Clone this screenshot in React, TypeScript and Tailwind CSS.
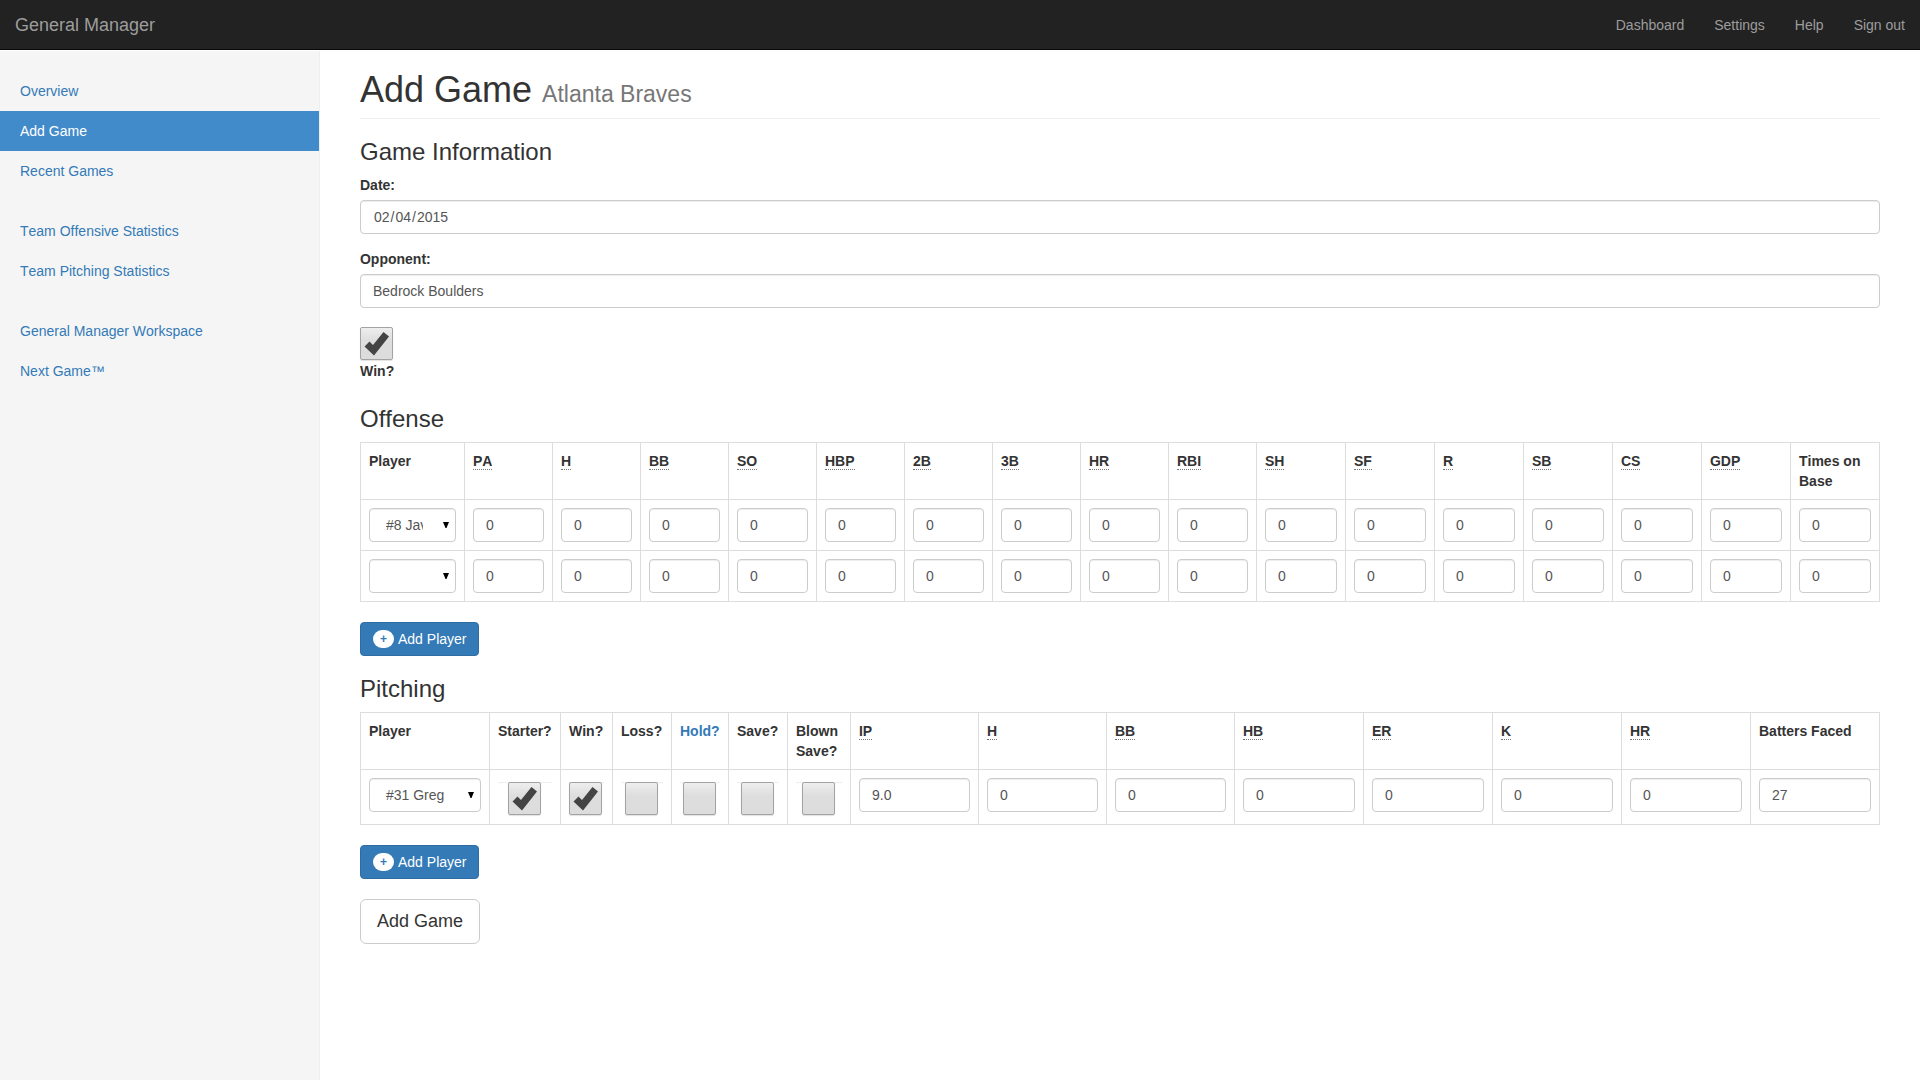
import React from "react";

const inputClass =
  "block h-[34px] w-full rounded border border-[#ccc] bg-white px-3 py-1.5 text-sm text-[#555] shadow-[inset_0_1px_1px_rgba(0,0,0,0.075)] outline-none focus:border-[#66afe9]";
const headCell = "h-[57px] border border-[#ddd] p-2 text-left align-top font-bold";
const bodyCell = "border border-[#ddd] p-2 align-top";

const offenseColumns: [string, string][] = [
  ["PA", "Plate Appearances"],
  ["H", "Hits"],
  ["BB", "Walks"],
  ["SO", "Strikeouts"],
  ["HBP", "Hit By Pitch"],
  ["2B", "Doubles"],
  ["3B", "Triples"],
  ["HR", "Home Runs"],
  ["RBI", "Runs Batted In"],
  ["SH", "Sacrifice Hits"],
  ["SF", "Sacrifice Flies"],
  ["R", "Runs"],
  ["SB", "Stolen Bases"],
  ["CS", "Caught Stealing"],
  ["GDP", "Grounded Into Double Play"],
];

const pitchingColumns: [string, string, string][] = [
  ["IP", "Innings Pitched", "9.0"],
  ["H", "Hits", "0"],
  ["BB", "Walks", "0"],
  ["HB", "Hit Batters", "0"],
  ["ER", "Earned Runs", "0"],
  ["K", "Strikeouts", "0"],
  ["HR", "Home Runs", "0"],
];

const decisions: { label: string; width: string; checked: boolean; link?: boolean }[] = [
  { label: "Starter?", width: "w-[71px]", checked: true },
  { label: "Win?", width: "w-[52px]", checked: true },
  { label: "Loss?", width: "w-[59px]", checked: false },
  { label: "Hold?", width: "w-[57px]", checked: false, link: true },
  { label: "Save?", width: "w-[59px]", checked: false },
  { label: "Blown Save?", width: "w-[63px]", checked: false },
];

const sidebarGroups = [
  ["Overview", "Add Game", "Recent Games"],
  ["Team Offensive Statistics", "Team Pitching Statistics"],
  ["General Manager Workspace", "Next Game™"],
];

function Abbr({ label, title }: { label: string; title: string }) {
  return (
    <abbr title={title} className="cursor-help border-b border-dotted border-[#777] no-underline">
      {label}
    </abbr>
  );
}

function Tick({ id, label, checked }: { id?: string; label?: string; checked: boolean }) {
  return (
    <span className="grid h-[34px] w-[34px] shrink-0">
      <input
        id={id}
        aria-label={label}
        type="checkbox"
        defaultChecked={checked}
        className="peer col-start-1 row-start-1 h-[33px] w-[33px] appearance-none rounded-xs border border-[#a3a3a3] bg-linear-to-b from-[#eee] via-[#dedede] via-40% to-[#dcdcdc] shadow-[0_1px_1px_rgba(0,0,0,0.12)]"
      />
      <svg
        viewBox="0 0 33 33"
        className="pointer-events-none invisible col-start-1 row-start-1 h-[33px] w-[33px] peer-checked:visible"
        aria-hidden="true"
      >
        <path d="M4.5 19.5 L9.5 14.5 L13 18 L23.5 5 L29 9.5 L14 28.5 Z" fill="#444" />
      </svg>
    </span>
  );
}

function PlayerSelect({ id, value }: { id: string; value: string }) {
  return (
    <span className="grid">
      <select
        id={id}
        aria-label="Player"
        defaultValue={value}
        className="col-start-1 row-start-1 block h-[34px] w-full appearance-none rounded border border-[#ccc] bg-white py-1.5 pr-8 pl-4 text-sm text-[#555] shadow-[inset_0_1px_1px_rgba(0,0,0,0.075)] outline-none"
      >
        <option value=""></option>
        <option value="8">#8 Javy Lopez</option>
        <option value="31">#31 Greg Maddux</option>
      </select>
      <svg
        viewBox="0 0 6 6"
        className="pointer-events-none col-start-1 row-start-1 mr-[7px] h-1.5 w-1.5 self-center justify-self-end"
        aria-hidden="true"
      >
        <path d="M0 0 H6 L3.5 6 H2.5 Z" fill="#000" />
      </svg>
    </span>
  );
}

function AddPlayer() {
  return (
    <button
      type="button"
      className="flex h-[34px] items-center gap-1 rounded border border-[#2e6da4] bg-[#337ab7] px-3 text-sm text-white"
    >
      <span className="flex h-[18px] items-center rounded-[10px] bg-white px-[7px] text-xs leading-none font-bold text-[#337ab7]">
        +
      </span>
      Add Player
    </button>
  );
}

function OffenseRow({ player, index }: { player: string; index: number }) {
  return (
    <tr>
      <td className={bodyCell}>
        <PlayerSelect id={`offense-player-${index}`} value={player} />
      </td>
      {offenseColumns.map(([label, title]) => (
        <td key={label} className={bodyCell}>
          <input className={inputClass} aria-label={title} defaultValue="0" />
        </td>
      ))}
      <td className={bodyCell}>
        <input className={inputClass} aria-label="Times on Base" defaultValue="0" />
      </td>
    </tr>
  );
}

export default function App() {
  return (
    <div className="flex min-h-screen flex-col bg-white font-['Liberation_Sans',Arial,sans-serif] text-sm leading-5 text-[#333] [font-kerning:none]">
      <header className="mb-px flex h-[50px] items-center justify-between border-b border-[#080808] bg-[#222] px-[15px] text-[#9d9d9d]">
        <a href="#" className="text-lg leading-5">
          General Manager
        </a>
        <nav className="flex gap-[30px]">
          <a href="#">Dashboard</a>
          <a href="#">Settings</a>
          <a href="#">Help</a>
          <a href="#">Sign out</a>
        </nav>
      </header>

      <div className="flex grow">
        <aside className="flex w-1/6 shrink-0 flex-col gap-5 border-r border-[#eee] bg-[#f5f5f5] py-5">
          {sidebarGroups.map((group) => (
            <ul key={group[0]}>
              {group.map((item) => (
                <li key={item}>
                  <a
                    href="#"
                    className={
                      item === "Add Game"
                        ? "block bg-[#428bca] px-5 py-2.5 text-white"
                        : "block px-5 py-2.5 text-[#337ab7]"
                    }
                  >
                    {item}
                  </a>
                </li>
              ))}
            </ul>
          ))}
        </aside>

        <main className="min-w-0 grow px-10 pt-[19px] pb-10">
          <div className="border-b border-[#eee] pb-2">
            <h1 className="text-4xl leading-10">
              Add Game <small className="text-[23px] leading-none text-[#777]">Atlanta Braves</small>
            </h1>
          </div>

          <form onSubmit={(e) => e.preventDefault()}>
            <h3 className="mt-5 mb-2.5 text-2xl leading-[26px]">Game Information</h3>
            <label htmlFor="date" className="mb-[5px] block font-bold">
              Date:
            </label>
            <input
              id="date"
              type="date"
              className={`${inputClass} [&::-webkit-calendar-picker-indicator]:hidden`}
              defaultValue="2015-02-04"
            />
            <label htmlFor="opponent" className="mt-[15px] mb-[5px] block font-bold">
              Opponent:
            </label>
            <input id="opponent" className={inputClass} defaultValue="Bedrock Boulders" />
            <div className="mt-[19px]">
              <Tick id="win" checked />
              <label htmlFor="win" className="block font-bold">
                Win?
              </label>
            </div>

            <h3 className="mt-[25px] mb-2.5 text-2xl leading-[26px]">Offense</h3>
            <table className="w-full table-fixed border-collapse">
              <thead>
                <tr>
                  <th className={`${headCell} w-[104px]`}>Player</th>
                  {offenseColumns.map(([label, title], i) => (
                    <th key={label} className={i < 9 ? `${headCell} w-[88px]` : headCell}>
                      <Abbr label={label} title={title} />
                    </th>
                  ))}
                  <th className={headCell}>Times on Base</th>
                </tr>
              </thead>
              <tbody>
                <OffenseRow player="8" index={1} />
                <OffenseRow player="" index={2} />
              </tbody>
            </table>
            <div className="mt-5">
              <AddPlayer />
            </div>

            <h3 className="mt-5 mb-2.5 text-2xl leading-[26px]">Pitching</h3>
            <table className="w-full table-fixed border-collapse">
              <thead>
                <tr>
                  <th className={`${headCell} w-[129px]`}>Player</th>
                  {decisions.map((d) => (
                    <th key={d.label} className={`${headCell} ${d.width}`}>
                      {d.link ? (
                        <a href="#" className="text-[#337ab7]">
                          {d.label}
                        </a>
                      ) : (
                        d.label
                      )}
                    </th>
                  ))}
                  {pitchingColumns.map(([label, title], i) => (
                    <th key={label} className={i < 3 ? `${headCell} w-[128px]` : headCell}>
                      <Abbr label={label} title={title} />
                    </th>
                  ))}
                  <th className={headCell}>Batters Faced</th>
                </tr>
              </thead>
              <tbody>
                <tr>
                  <td className={bodyCell}>
                    <PlayerSelect id="pitching-player" value="31" />
                  </td>
                  {decisions.map((d) => (
                    <td key={d.label} className={bodyCell}>
                      <div className="mt-1 flex justify-center shadow-[inset_0_1px_1px_rgba(0,0,0,0.075)]">
                        <Tick label={d.label} checked={d.checked} />
                      </div>
                    </td>
                  ))}
                  {pitchingColumns.map(([label, title, value]) => (
                    <td key={label} className={bodyCell}>
                      <input className={inputClass} aria-label={title} defaultValue={value} />
                    </td>
                  ))}
                  <td className={bodyCell}>
                    <input className={inputClass} aria-label="Batters Faced" defaultValue="27" />
                  </td>
                </tr>
              </tbody>
            </table>
            <div className="mt-5">
              <AddPlayer />
            </div>
            <button
              type="submit"
              className="mt-5 block rounded-md border border-[#ccc] bg-white px-4 py-2.5 text-lg leading-[23px] text-[#333]"
            >
              Add Game
            </button>
          </form>
        </main>
      </div>
    </div>
  );
}
